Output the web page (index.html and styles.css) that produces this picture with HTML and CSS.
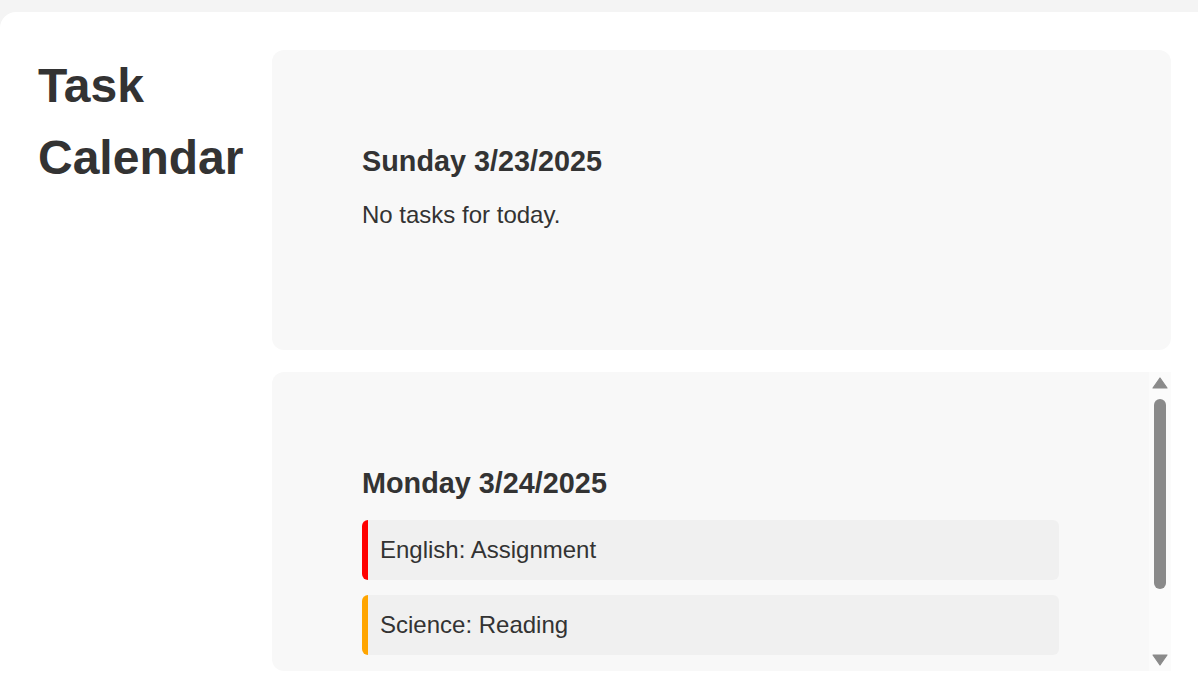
FILE: index.html
```html
<!DOCTYPE html>
<html lang="en">
<head>
<meta charset="utf-8">
<title>Task Calendar</title>
<link rel="stylesheet" href="styles.css">
</head>
<body>
<div class="app">
  <aside class="sidebar">
    <h1 class="title">Task Calendar</h1>
  </aside>
  <main class="days">
    <section class="day">
      <div class="day-body">
        <h2 class="day-title">Sunday 3/23/2025</h2>
        <p class="empty">No tasks for today.</p>
      </div>
    </section>
    <section class="day day-scroll">
      <div class="day-body">
        <h2 class="day-title">Monday 3/24/2025</h2>
        <ul class="tasks">
          <li class="task task-high">English: Assignment</li>
          <li class="task task-medium">Science: Reading</li>
        </ul>
      </div>
      <div class="scrollbar" aria-hidden="true">
        <span class="sb-btn">
          <svg width="16" height="12" viewBox="0 0 16 12"><path d="M8 1 L15 11 L1 11 Z" fill="#8a8a8a" stroke="#8a8a8a" stroke-width="1.2" stroke-linejoin="round"/></svg>
        </span>
        <div class="sb-track"><div class="sb-thumb"></div></div>
        <span class="sb-btn">
          <svg width="16" height="12" viewBox="0 0 16 12"><path d="M8 11 L15 1 L1 1 Z" fill="#8a8a8a" stroke="#8a8a8a" stroke-width="1.2" stroke-linejoin="round"/></svg>
        </span>
      </div>
    </section>
  </main>
</div>
</body>
</html>
```
FILE: styles.css
```css
html, body {
  margin: 0;
  height: 100%;
}
body {
  background: #f4f4f4;
  font-family: "Liberation Sans", Arial, sans-serif;
  color: #333;
  overflow: hidden;
  padding-top: 12px;
  box-sizing: border-box;
}
.app {
  background: #fff;
  border-radius: 16px 0 0 0;
  min-height: 100%;
  display: grid;
  grid-template-columns: 234px 1fr;
  padding: 38px 27px 0 38px;
  box-sizing: border-box;
}
.title {
  margin: 0;
  font-size: 48px;
  line-height: 72px;
  font-weight: 700;
  color: #333;
}
.days {
  display: flex;
  flex-direction: column;
  gap: 22px;
}
.day {
  background: #f8f8f8;
  border-radius: 12px;
  height: 300px;
  display: flex;
}
.day-scroll {
  height: 299px;
}
.day-body {
  flex: 1;
  min-width: 0;
  padding: 90px 90px 0;
  overflow: hidden;
}
.day-title {
  margin: 5px 0 20px;
  font-size: 28.8px;
  line-height: normal;
  font-weight: 700;
}
.empty {
  margin: 0;
  padding-top: 3px;
  font-size: 24px;
  line-height: normal;
}
.tasks {
  list-style: none;
  margin: 0;
  padding: 0;
}
.task {
  background: #f0f0f0;
  border-left: 6px solid #ccc;
  border-radius: 6px;
  padding: 15px 12px;
  font-size: 24px;
  line-height: 30px;
  margin-bottom: 15px;
}
.task:last-child { margin-bottom: 0; }
.task-high { border-left-color: #ff0000; }
.task-medium { border-left-color: #ffa500; }

.scrollbar {
  width: 22px;
  flex: none;
  background: #fbfbfb;
  display: flex;
  flex-direction: column;
}
.sb-btn {
  height: 22px;
  display: flex;
  align-items: center;
  justify-content: center;
}
.sb-btn svg { display: block; }
.sb-track {
  flex: 1;
  display: flex;
  justify-content: center;
}
.sb-thumb {
  margin-top: 5px;
  width: 12px;
  height: 190px;
  border-radius: 6px;
  background: #8a8a8a;
}
```
